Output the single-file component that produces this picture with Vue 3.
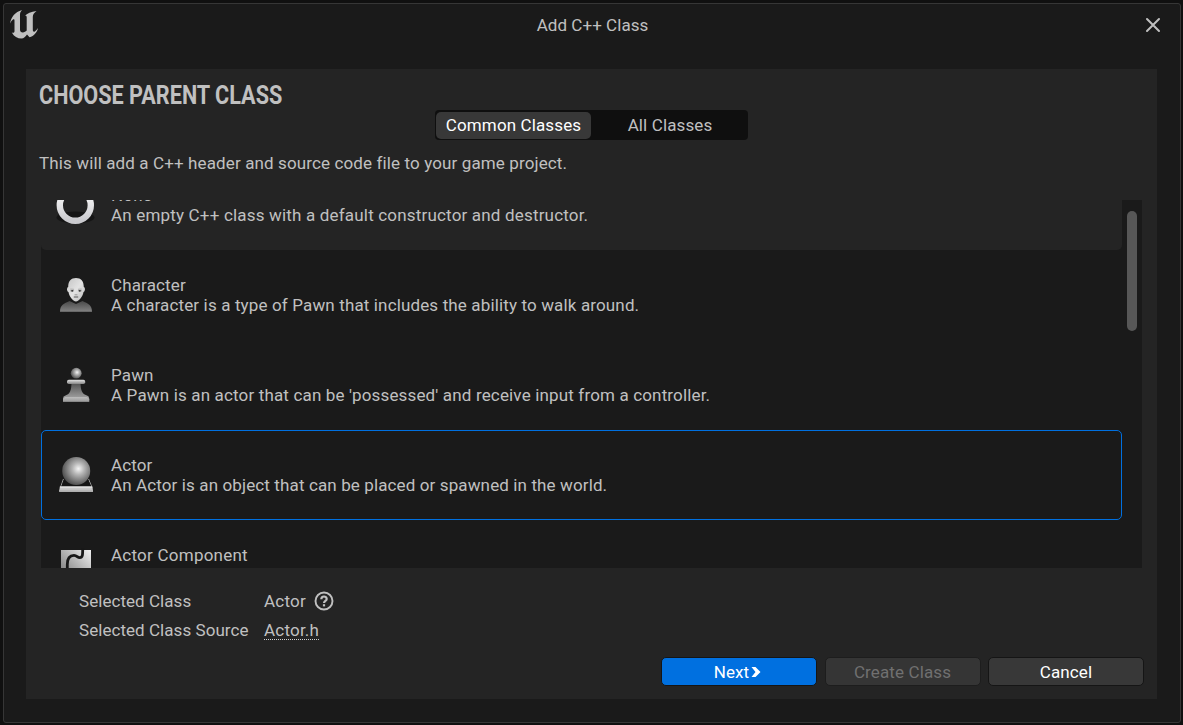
<script setup>
const classes = [
  { id: 'none', name: 'None', text: 'An empty C++ class with a default constructor and destructor.' },
  { id: 'character', name: 'Character', text: 'A character is a type of Pawn that includes the ability to walk around.' },
  { id: 'pawn', name: 'Pawn', text: "A Pawn is an actor that can be 'possessed' and receive input from a controller." },
  { id: 'actor', name: 'Actor', text: 'An Actor is an object that can be placed or spawned in the world.' },
  { id: 'component', name: 'Actor Component', text: '' },
]
</script>

<template>
  <div class="screen">
    <div class="window">
      <header class="titlebar">
        <svg class="logo" width="30" height="30" viewBox="0 0 30 30">
          <path fill="#c0c0c0" d="M1 14.500C2 8 6 3 13 1C11.500 2.500 11 4 11 6V20.500C11 22.500 12 23.400 13.800 23.400C15.400 23.400 16.600 22.600 17.700 21.500V8.500C17.700 7.200 17.200 6.500 15.800 7C18 4.500 22 2.500 27.500 2C25 4 23.800 5.500 23.800 8V20.500C23.800 22.500 24.500 23 25.800 22.400C27 21.900 28 20.500 29 19C28 23.500 25 27 20.500 28.200L18 25.500C16.500 27.500 14.800 29.500 12.500 29.500C8.500 29.500 5 27.500 2.800 23.500C4.800 24.200 5.500 23.500 5.500 22V11.500C5.500 10.300 4.800 10 4 10.500C2.800 11.300 2 12.500 1 14.500Z" />
        </svg>
        <span class="caption">Add C++ Class</span>
        <svg class="close" width="16" height="16" viewBox="0 0 16 16">
          <path d="M2 2L14 14M14 2L2 14" stroke="#c0c0c0" stroke-width="2" stroke-linecap="round" />
        </svg>
      </header>
      <main class="panel">
        <h1><span>CHOOSE PARENT CLASS</span></h1>
        <div class="tabs">
          <button class="tab active">Common Classes</button>
          <button class="tab">All Classes</button>
        </div>
        <p class="intro">This will add a C++ header and source code file to your game project.</p>
        <div class="list">
          <div class="rows">
            <div v-for="c in classes" :key="c.id" class="row" :class="c.id">
              <svg class="icon" width="40" height="40" viewBox="0 0 40 40">
                <defs>
                  <linearGradient id="ring" x1="0" y1="0" x2="0" y2="1"><stop offset="0" stop-color="#fff" /><stop offset="1" stop-color="#cacace" /></linearGradient>
                  <linearGradient id="bust" x1="0" y1="0" x2="0" y2="1"><stop offset="0" stop-color="#484848" /><stop offset="1" stop-color="#848484" /></linearGradient>
                  <linearGradient id="face" x1="0" y1="0" x2="1" y2="1"><stop offset="0" stop-color="#c4c4c4" /><stop offset=".5" stop-color="#e2e2e2" /><stop offset="1" stop-color="#bcbcbc" /></linearGradient>
                  <radialGradient id="ball" cx=".58" cy=".42" r=".6"><stop offset="0" stop-color="#f5f5f5" /><stop offset=".35" stop-color="#b5b5b5" /><stop offset="1" stop-color="#4e4e4e" /></radialGradient>
                  <linearGradient id="stem" x1="0" y1="0" x2="0" y2="1"><stop offset="0" stop-color="#4c4c4c" /><stop offset=".75" stop-color="#999" /><stop offset="1" stop-color="#aaa" /></linearGradient>
                  <linearGradient id="plate" x1="0" y1="0" x2="0" y2="1"><stop offset="0" stop-color="#e2e2e2" /><stop offset="1" stop-color="#858585" /></linearGradient>
                  <linearGradient id="tile" x1="0" y1="1" x2="1" y2="0"><stop offset="0" stop-color="#707070" /><stop offset="1" stop-color="#f0f0f0" /></linearGradient>
                </defs>
                <g v-if="c.id === 'none'">
                  <ellipse cx="19.500" cy="32.500" rx="19" ry="6" fill="#151515" />
                  <circle cx="19.300" cy="20.300" r="15.500" fill="none" stroke="url(#ring)" stroke-width="6.400" />
                </g>
                <g v-else-if="c.id === 'character'">
                  <path fill="url(#bust)" d="M4 36.800C4 30 8 28.500 13.500 26L20 29L26.500 26C32 28.500 36 30 36 36.800Z" />
                  <path fill="url(#face)" d="M12.200 12C12.200 6 15 3 20 3S27.800 6 27.800 12C29.500 12.500 29.300 16.500 27.500 17C27 21 23 26.400 20 26.400S13 21 12.500 17C10.700 16.500 10.500 12.500 12.200 12Z" />
                  <path d="M14.500 15.800H17.800M22.200 15.800H25.500" stroke="#707070" stroke-width="1" />
                  <circle cx="16.200" cy="15.800" r=".9" fill="#333" />
                  <circle cx="23.800" cy="15.800" r=".9" fill="#333" />
                  <path d="M14.300 14.100L18 14.300M22 14.300L25.700 14.100" stroke="#999" stroke-width=".7" />
                  <path d="M18.600 19.800H21.400" stroke="#888" stroke-width=".8" />
                  <path d="M17.800 22H22.200" stroke="#555" stroke-width="1" />
                </g>
                <g v-else-if="c.id === 'pawn'">
                  <path fill="url(#stem)" d="M15.500 17H24.500C24.500 25 26 29 31 30.500Q33.200 31 33.200 33.500V36.800H7V33.500Q7 31 9.500 30.500C14 29 15.500 25 15.500 17Z" />
                  <path fill="url(#plate)" d="M7 34.300L9 32H31L33.200 34.300V36.800H7Z" opacity=".5" />
                  <rect x="11" y="14.800" width="18.200" height="4.200" rx="1.800" fill="url(#plate)" />
                  <circle cx="20.200" cy="8.200" r="5.400" fill="url(#ball)" />
                </g>
                <g v-else-if="c.id === 'actor'">
                  <path d="M7.500 24L4.500 32.500M32.500 24L36 32.500" stroke="#aaa" stroke-width="1" />
                  <path fill="#151515" d="M8 24H32L35.500 32H5Z" />
                  <path fill="#c8c8c8" d="M3.800 31.500H36.500L37 36.800H3.200Z" />
                  <path d="M3.200 34.800H37V36.800H3.200Z" fill="#b5b5b5" />
                  <path d="M4.200 32H36" stroke="#f2f2f2" stroke-width="1" />
                  <circle cx="20.200" cy="16" r="14" fill="url(#ball)" />
                </g>
                <g v-else>
                  <path fill="url(#tile)" d="M5 5H35V35H5Z" />
                  <path d="M11.300 36V20C11.300 14 14 10.800 18 10.800C21 10.800 21.300 13.200 23.800 13.200C26.500 13.200 26.700 11 26.700 4" transform="translate(0 -.5)" fill="none" stroke="#171717" stroke-width="2.800" />
                </g>
              </svg>
              <div class="info">
                <div>{{ c.name }}</div>
                <div>{{ c.text }}</div>
              </div>
            </div>
          </div>
          <div class="scroll"><div class="thumb"></div></div>
        </div>
        <div class="details">
          <span>Selected Class</span>
          <span class="value">Actor
            <svg width="20" height="20" viewBox="0 0 20 20" fill="none" stroke="#c0c0c0">
              <circle cx="10" cy="10" r="8.500" stroke-width="1.900" />
              <path d="M7.300 8.200C7.300 4.600 12.700 4.700 12.700 8C12.700 9.800 10 10 10 12" stroke-width="2.200" />
              <path d="M10 13.200V15.400" stroke-width="2.200" />
            </svg>
          </span>
          <span>Selected Class Source</span>
          <span class="value"><a>Actor.h</a></span>
        </div>
        <footer>
          <button class="btn primary">Next<svg width="10" height="12" viewBox="0 0 10 12"><path fill="#fff" d="M0.500 1H4.500L9.500 6L4.500 11H0.500L4.500 6Z" /></svg></button>
          <button class="btn disabled">Create Class</button>
          <button class="btn">Cancel</button>
        </footer>
      </main>
    </div>
  </div>
</template>

<style>
body { background: #0f0f0f; }
</style>

<style scoped>
* { box-sizing: border-box; }
.screen { height: 725px; padding: 3px 2px 2px 3px; background: #101010; overflow: hidden; font: 17px/20px Roboto, sans-serif; letter-spacing: .12px; color: #c0c0c0; }
.window { height: 720px; border: 1px solid #363636; border-radius: 3px; background: #1a1a1a; padding: 0 22px; }
.titlebar { height: 65px; margin: 0 -22px; padding: 6px 19px 0 5px; display: flex; align-items: flex-start; justify-content: space-between; }
.logo { margin-top: -1px; }
.caption { margin: 5px 0 0 1px; letter-spacing: .05px; }
.close { margin-top: 7px; }
.panel { height: 630px; background: #242424; padding: 11px 15px 0; width: 1131px; }
h1 { margin: 0 0 0 -2px; height: 30px; font-size: 26px; line-height: 30px; font-weight: 700; letter-spacing: 0; white-space: nowrap; }
h1 span { display: inline-block; transform: scaleX(.832); transform-origin: 0 50%; }
button { font: inherit; letter-spacing: inherit; padding: 0; border: 0; color: inherit; }
.tabs { width: 313px; height: 30px; margin: 0 auto 0 394px; padding: 2px 1px; border-radius: 4px; background: #0f0f0f; display: flex; }
.tab { width: 156px; height: 27px; padding-bottom: 2px; border-radius: 5px; background: transparent; }
.tab + .tab { padding-left: 2px; }
.tab.active { background: #383838; color: #fff; width: 155px; }
.intro { margin: 13px 0 0 -2px; height: 47px; }
.list { height: 368px; display: flex; background: #1a1a1a; overflow: hidden; }
.rows { width: 1081px; margin-top: -40px; height: 450px; flex: none; }
.row { height: 90px; display: flex; align-items: center; padding-left: 15px; border: 1px solid transparent; border-radius: 5px; }
.row.none { background: #242424; letter-spacing: .18px; }
.row.actor { border-color: #0070e0; }
.row.pawn { letter-spacing: .155px; }
.row.character { letter-spacing: .14px; }
.row.component { letter-spacing: .24px; }
.icon { margin-left: -1px; flex: none; }
.info { margin-left: 15px; height: 40px; white-space: nowrap; }
.scroll { width: 20px; padding: 11px 5px 0; }
.thumb { height: 120px; border-radius: 5px; background: #575757; }
.details { margin: 19px 0 0 38px; display: grid; grid-template-columns: 185px auto; grid-template-rows: 29px 29px; line-height: 29px; letter-spacing: .05px; }
.value { display: flex; align-items: center; letter-spacing: .2px; }
.value svg { margin: -1px 0 0 8px; }
a { line-height: 21px; border-bottom: 1px dotted #d0d0d0; height: 20px; margin-top: -2px; }
footer { display: flex; gap: 7.500px; justify-content: flex-end; margin: 12px -2px 0 0; }
.btn { width: 156px; height: 29px; border: 1px solid #151515; border-radius: 5px; background: #383838; color: #fff; display: flex; align-items: center; justify-content: center; }
.btn.primary { background: #0070e0; padding-right: 3px; }
.btn.primary svg { margin-left: 2px; }
.btn.disabled { border-color: #1d1d1d; background: #353535; color: #707070; }
</style>
